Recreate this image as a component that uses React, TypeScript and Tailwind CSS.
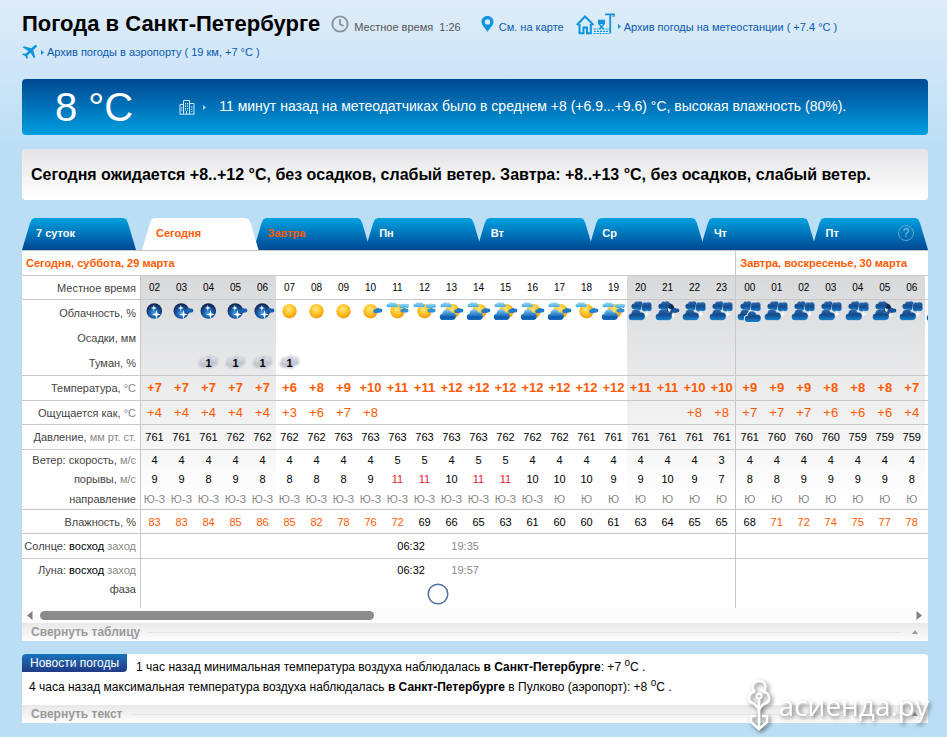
import { useState } from "react";
import type { ReactNode } from "react";
import { clsx } from "clsx";

type Sky =
  | "moon"
  | "moonFew"
  | "sun"
  | "sunFew"
  | "sunHigh"
  | "sunMixed"
  | "dayCloud"
  | "dayCloudHigh"
  | "nightCloud"
  | "nightBroken"
  | "overcast";

type Hour = {
  hour: string;
  sky: Sky;
  fog?: string;
  temp: string;
  feels?: string;
  pressure: number;
  wind: number;
  gust: number;
  dir: string;
  humidity: number;
};

const h = (
  hour: string,
  sky: Sky,
  temp: string,
  feels: string,
  pressure: number,
  wind: number,
  gust: number,
  dir: string,
  humidity: number,
  fog?: string
): Hour => ({ hour, sky, temp, feels, pressure, wind, gust, dir, humidity, fog });

const today: Hour[] = [
  h("02", "moon", "+7", "+4", 761, 4, 9, "Ю-З", 83),
  h("03", "moonFew", "+7", "+4", 761, 4, 9, "Ю-З", 83),
  h("04", "moon", "+7", "+4", 761, 4, 8, "Ю-З", 84, "1"),
  h("05", "moonFew", "+7", "+4", 762, 4, 9, "Ю-З", 85, "1"),
  h("06", "moonFew", "+7", "+4", 762, 4, 8, "Ю-З", 86, "1"),
  h("07", "sun", "+6", "+3", 762, 4, 8, "Ю-З", 85, "1"),
  h("08", "sun", "+8", "+6", 762, 4, 8, "Ю-З", 82),
  h("09", "sun", "+9", "+7", 763, 4, 8, "Ю-З", 78),
  h("10", "sunFew", "+10", "+8", 763, 4, 9, "Ю-З", 76),
  h("11", "sunHigh", "+11", "", 763, 5, 11, "Ю-З", 72),
  h("12", "sunHigh", "+11", "", 763, 5, 11, "Ю-З", 69),
  h("13", "dayCloud", "+12", "", 763, 4, 10, "Ю-З", 66),
  h("14", "dayCloud", "+12", "", 763, 5, 11, "Ю-З", 65),
  h("15", "dayCloud", "+12", "", 762, 5, 11, "Ю-З", 63),
  h("16", "dayCloud", "+12", "", 762, 4, 10, "Ю-З", 61),
  h("17", "dayCloud", "+12", "", 762, 4, 10, "Ю", 60),
  h("18", "sunMixed", "+12", "", 761, 4, 10, "Ю", 60),
  h("19", "dayCloudHigh", "+12", "", 761, 4, 9, "Ю", 61),
  h("20", "nightCloud", "+11", "", 761, 4, 9, "Ю", 63),
  h("21", "nightBroken", "+11", "", 761, 4, 10, "Ю", 64),
  h("22", "nightCloud", "+10", "+8", 761, 4, 9, "Ю", 65),
  h("23", "nightCloud", "+10", "+8", 761, 3, 7, "Ю", 65),
];

const tomorrow: Hour[] = [
  h("00", "overcast", "+9", "+7", 761, 4, 8, "Ю", 68),
  h("01", "nightCloud", "+9", "+7", 760, 4, 8, "Ю", 71),
  h("02", "nightCloud", "+9", "+7", 760, 4, 9, "Ю", 72),
  h("03", "nightCloud", "+8", "+6", 760, 4, 9, "Ю", 74),
  h("04", "nightCloud", "+8", "+6", 759, 4, 9, "Ю", 75),
  h("05", "nightBroken", "+8", "+6", 759, 4, 9, "Ю", 77),
  h("06", "nightCloud", "+7", "+4", 759, 4, 8, "Ю", 78),
];

const hours = [...today, ...tomorrow];

const tabs = ["7 суток", "Сегодня", "Завтра", "Пн", "Вт", "Ср", "Чт", "Пт"];

/* Gradients shared by all the weather icons */
function IconDefs() {
  return (
    <svg width="0" height="0" className="absolute" aria-hidden="true">
      <defs>
        <radialGradient id="sun" cx="45%" cy="35%" r="65%">
          <stop offset="0" stopColor="#ffe680" />
          <stop offset="0.5" stopColor="#ffc72e" />
          <stop offset="1" stopColor="#f59a0c" />
        </radialGradient>
        <radialGradient id="moon" cx="50%" cy="65%" r="60%">
          <stop offset="0" stopColor="#4aa8ea" />
          <stop offset="0.5" stopColor="#1a5ca8" />
          <stop offset="1" stopColor="#0c2450" />
        </radialGradient>
        <linearGradient id="cloud" x1="0" y1="0" x2="0" y2="1">
          <stop offset="0" stopColor="#8ccbf0" />
          <stop offset="0.4" stopColor="#3a93d6" />
          <stop offset="0.75" stopColor="#0f59ab" />
          <stop offset="1" stopColor="#1470c4" />
        </linearGradient>
        <linearGradient id="high" x1="0" y1="0" x2="0" y2="1">
          <stop offset="0" stopColor="#9fdaf6" />
          <stop offset="1" stopColor="#3fa9e2" />
        </linearGradient>
        <linearGradient id="dark" x1="0" y1="0" x2="0" y2="1">
          <stop offset="0" stopColor="#2f6bb0" />
          <stop offset="0.5" stopColor="#124a8c" />
          <stop offset="1" stopColor="#1a80cc" />
        </linearGradient>
      </defs>
    </svg>
  );
}

const puff = (cx: number, cy: number, r: number) =>
  `M${cx - r} ${cy} a${r} ${r} 0 1 1 ${2 * r} 0 a${r} ${r} 0 1 1 ${-2 * r} 0 Z`;

const BIG_CLOUD = [puff(9, 13.8, 4.5), puff(4.9, 16.9, 3.1), puff(14.1, 16.3, 3.7), "M4.900 14 H14 V20 H4.900 Z"].join(" ");
const HIGH_LEFT = [puff(4.4, 5.4, 1.9), puff(7.2, 4.8, 2.5), puff(10.2, 4.8, 2.2), puff(12.2, 5.6, 1.7)].join(" ");
const HIGH_RIGHT = [puff(17, 6, 2), puff(20, 5.8, 2.4), puff(23, 5.8, 2.1)].join(" ");
const HIGH_RIGHT_LOW = [puff(18, 10.8, 1.7), puff(20.6, 10.2, 2.2), puff(22.8, 10.6, 1.8)].join(" ");
const SMALL_RIGHT = [puff(18.2, 11.3, 2), puff(20.8, 10.6, 2.5), puff(23.4, 10.4, 2)].join(" ");
const TOP_LEFT = [puff(7.3, 6.3, 2.9), puff(9.6, 3.8, 2.4), puff(12.8, 4.2, 2.9), puff(11.5, 7.5, 3)].join(" ");
const TOP_RIGHT = [puff(18, 5.4, 3), puff(21.6, 5.2, 2.9), puff(17.7, 8.4, 2.8), puff(21.8, 8.3, 2.8)].join(" ");

const HighLeft = () => <path d={HIGH_LEFT} fill="url(#high)" />;

const HighRight = () => (
  <>
    <path d={HIGH_RIGHT} fill="url(#high)" />
    <path d={HIGH_RIGHT_LOW} fill="#3592d2" />
  </>
);

const SmallRight = ({ fill }: { fill: string }) => <path d={SMALL_RIGHT} fill={fill} />;

const Star = ({ x, y, r }: { x: number; y: number; r: number }) => (
  <path
    transform={`translate(${x} ${y}) scale(${r})`}
    d="M0 -1 L0.220 -0.220 L1 0 L0.220 0.220 L0 1 L-0.220 0.220 L-1 0 L-0.220 -0.220 Z"
    fill="#fff"
  />
);

const Moon = () => (
  <>
    <circle cx="13.3" cy="11" r="7.8" fill="url(#moon)" />
    <Star x={12.8} y={8} r={3} />
    <Star x={15.5} y={14.5} r={4.4} />
  </>
);

const Sun = ({ cx = 13.5 }: { cx?: number }) => <circle cx={cx} cy="11.2" r="7.2" fill="url(#sun)" />;

const NightBase = () => (
  <path d={BIG_CLOUD} fill="url(#dark)" stroke="#8fb9e0" strokeWidth="0.800" paintOrder="stroke" />
);

const NightClouds = () => (
  <>
    <path d={TOP_LEFT} fill="url(#dark)" />
    <path d={TOP_RIGHT} fill="url(#dark)" stroke="#a9cbea" strokeWidth="0.800" paintOrder="stroke" />
    <Star x={19.500} y={14} r={3.6} />
    <NightBase />
  </>
);

const skyArt: Record<Sky, ReactNode> = {
  moon: <Moon />,
  moonFew: (
    <>
      <Moon />
      <SmallRight fill="#1660ad" />
    </>
  ),
  sun: <Sun />,
  sunFew: (
    <>
      <Sun />
      <SmallRight fill="#1f83cf" />
    </>
  ),
  sunHigh: (
    <>
      <Sun />
      <HighLeft />
      <HighRight />
    </>
  ),
  sunMixed: (
    <>
      <Sun />
      <HighLeft />
      <SmallRight fill="#1f83cf" />
    </>
  ),
  dayCloud: (
    <>
      <Sun cx={14.5} />
      <HighLeft />
      <SmallRight fill="#1f7bc8" />
      <path d={BIG_CLOUD} fill="url(#cloud)" />
    </>
  ),
  dayCloudHigh: (
    <>
      <Sun cx={14.5} />
      <HighLeft />
      <HighRight />
      <path d={BIG_CLOUD} fill="url(#cloud)" />
    </>
  ),
  nightCloud: <NightClouds />,
  nightBroken: (
    <>
      <circle cx="14.5" cy="9" r="6" fill="#0f2c58" />
      <path d={TOP_LEFT} fill="url(#dark)" />
      <path d="M14 8 L17.500 9.500 L16.500 12.500 L14 11 Z" fill="#dfe6ef" />
      <SmallRight fill="#15549c" />
      <Star x={19} y={15} r={3.2} />
      <NightBase />
    </>
  ),
  overcast: (
    <>
      <NightClouds />
      <path
        transform="translate(7 2)"
        d={BIG_CLOUD}
        fill="url(#dark)"
        stroke="#e4eefa"
        strokeWidth="2"
        paintOrder="stroke"
      />
    </>
  ),
};

function SkyIcon({ sky }: { sky: Sky }) {
  return (
    <svg width="27" height="24" viewBox="0 0 27 24" className="block max-w-none" role="img" aria-label={sky}>
      {skyArt[sky]}
    </svg>
  );
}

function Fog({ value }: { value: string }) {
  return (
    <span className="relative flex h-6 w-full items-center justify-center font-bold">
      <svg width="27" height="24" viewBox="0 0 27 24" className="absolute inset-0 blur-[1px]" aria-hidden="true">
        <path
          d="M5 15 C2.500 14.500 3 11 5 10.800 C4.500 7.500 8 5.500 10.500 7 C12 4.500 16 4 18 6 C21 5 23.500 7 22.500 9.500 C24 12 22 15 19.500 14.500 C18 18 13.500 18.300 12 16.500 C9.500 17.500 6 17.500 5 15 Z"
          fill="#c0c5d0"
        />
        <path d="M7 11 C9 8 13 8 14 10 M16 8 C18 7 20 8 20 10" stroke="#e4e7ee" strokeWidth="2" fill="none" />
      </svg>
      <span className="relative">{value}</span>
    </span>
  );
}

const Arrow = ({ className }: { className?: string }) => (
  <svg width="3" height="5" viewBox="0 0 3 5" className={clsx("shrink-0", className)} aria-hidden="true">
    <path d="M0 0 L3 2.500 L0 5 Z" fill="currentColor" />
  </svg>
);

function Header() {
  return (
    <header className="pt-[10px]">
      <div className="flex items-center whitespace-nowrap">
        <h1 className="text-[22px] leading-7 font-bold text-black">Погода в Санкт-Петербурге</h1>
        <svg width="18" height="18" viewBox="0 0 18 18" fill="none" className="ml-[11px]" aria-hidden="true">
          <circle cx="9" cy="9" r="7.700" stroke="#8a9098" strokeWidth="1.800" />
          <path d="M9 4 V9.300 L12.500 11" stroke="#8a9098" strokeWidth="1.800" />
        </svg>
        <span className="ml-[5px] pt-[6px] text-[11px] leading-4 text-[#555]">Местное время&nbsp; 1:26</span>
        <a href="#map" className="ml-[20px] flex items-center text-[11px] leading-4 text-[#0a5aaf]">
          <svg width="13" height="16" viewBox="0 0 13 16" aria-hidden="true">
            <path
              fillRule="evenodd"
              d="M6.500 0 C10 0 12.500 2.500 12.500 5.800 C12.500 9.200 8.800 12 6.500 16 C4.200 12 0.500 9.200 0.500 5.800 C0.500 2.500 3 0 6.500 0 Z M6.500 3.200 A2.700 2.700 0 1 0 6.500 8.600 A2.700 2.700 0 1 0 6.500 3.200 Z"
              fill="#0e93dc"
            />
          </svg>
          <span className="ml-[5px] pt-[6px]">См. на карте</span>
        </a>
        <a href="#station" className="ml-[12px] flex items-center text-[11px] leading-4 text-[#0a5aaf]">
          <svg width="40" height="22" viewBox="0 0 40 22" fill="none" stroke="#0e93dc" aria-hidden="true">
            <path d="M0.800 12 L9 3.500 L17.500 12" strokeWidth="2" />
            <path d="M3.500 11 V20.200 H7.500 V14.500 H11 V20.200 H14.800 V11" strokeWidth="2" />
            <path d="M22 6.700 H29 V11 H22 Z" fill="#0e93dc" stroke="none" />
            <path d="M23 11 L27.500 16 M28 11 L23.500 16" strokeWidth="1.500" />
            <path d="M17.500 16 H33 M18 18.300 H33 M17.500 20.500 H33" strokeWidth="1.200" strokeDasharray="2 1" />
            <path d="M34.200 20.500 V1.500 M29 1.300 H39" strokeWidth="1.800" />
            <path d="M36 3 H39" strokeWidth="1" />
          </svg>
          <Arrow className="mt-[5px] ml-[2px] text-[#0e93dc]" />
          <span className="ml-[3px] pt-[6px]">Архив погоды на метеостанции ( +7.4 °C )</span>
        </a>
      </div>
      <a href="#airport" className="mt-[5px] flex w-fit items-center text-[11px] leading-[18px] text-[#0a5aaf]">
        <svg width="15" height="14" viewBox="0 0 15 14" fill="#0e93dc" aria-hidden="true">
          <path d="M14.800 0.200 C13.500 -0.200 12.200 0.600 11 1.700 L9.300 3.300 L1.800 1.200 L0.600 2.300 L6.500 5.900 L3.700 8.800 L1.200 8.400 L0 9.500 L3.300 11 L4.700 14 L5.900 12.900 L5.500 10.500 L8.500 7.800 L12 13.300 L13.200 12.200 L11.200 5.100 L12.900 3.500 C14.200 2.300 15.100 1.300 14.800 0.200 Z" />
        </svg>
        <Arrow className="ml-[4px] text-[#0e93dc]" />
        <span className="ml-[3px]">Архив погоды в аэропорту ( 19 км, +7 °C )</span>
      </a>
    </header>
  );
}

function CurrentBanner() {
  return (
    <section className="mt-[18px] flex h-14 items-center rounded-[4px] bg-linear-to-b from-[#004892] to-[#00a0e0] pl-[33px] text-white">
      <p className="text-[40px] leading-none whitespace-nowrap">8 °C</p>
      <svg width="16" height="16" viewBox="0 0 16 16" fill="none" stroke="#cfe8f8" className="ml-[46px] shrink-0" aria-hidden="true">
        <path d="M4.500 15 V1.500 H10.500 V15 M1 15 V5.500 H4.500 M10.500 4.500 H15 V15 M0.500 15.200 H15.500" />
        <path d="M6.500 4 V12 M8.500 4 V12 M2.800 8 V13 M12.800 7 V13" strokeDasharray="1.500 1" />
        <path d="M7.500 12 V15" />
      </svg>
      <Arrow className="ml-[8px] text-[#9fd6f2]" />
      <p className="ml-[13px] pb-[2px] text-[14px] leading-5">
        11 минут назад на метеодатчиках было в среднем +8 (+6.9...+9.6) °C, высокая влажность (80%).
      </p>
    </section>
  );
}

function Tabs({ active, onSelect }: { active: string; onSelect: (tab: string) => void }) {
  return (
    <nav className="mt-[18px] flex h-8">
      {tabs.map((tab, i) => (
        <button
          key={tab}
          onClick={() => onSelect(tab)}
          className={clsx(
            "flex items-center pb-[2px] pl-[14px] text-left text-[11px] font-bold",
            "[clip-path:polygon(0_100%,8px_5px,10px_1px,13px_0,calc(100%_-_13px)_0,calc(100%_-_10px)_1px,calc(100%_-_8px)_5px,100%_100%)]",
            i === 0 ? "mr-[6px] w-[114px] shrink-0" : "flex-1",
            i > 1 && "-ml-[5px]",
            tab === active ? "relative z-10 bg-white" : "bg-linear-to-b from-[#00a2e0] to-[#004892]",
            i === 1 || i === 2 ? "text-[#ff5a00]" : "text-white"
          )}
        >
          {tab}
          {i === tabs.length - 1 && (
            <span className="mr-[14px] ml-auto flex size-4 items-center justify-center rounded-full border border-[#5fa3d3] text-[12px] leading-none font-normal text-[#8fc0e2]">
              ?
            </span>
          )}
        </button>
      ))}
    </nav>
  );
}

type RowProps = {
  label: ReactNode;
  height: string;
  line?: boolean;
  className?: string;
  render: (hour: Hour) => ReactNode;
  extra?: ReactNode;
};

const LINE = "border-b border-[#c8c8c8]";

function RowLabel({ children, line = true }: { children: ReactNode; line?: boolean }) {
  return (
    <th
      scope="row"
      className={clsx("border-r border-r-[#c8c8c8] pr-[4px] text-right font-normal whitespace-nowrap text-[#444]", line && LINE)}
    >
      {children}
    </th>
  );
}

function Row({ label, height, line = true, className, render, extra }: RowProps) {
  return (
    <tr className={height}>
      <RowLabel line={line}>{label}</RowLabel>
      {hours.map((hour, i) => (
        <td
          key={i}
          className={clsx("text-center whitespace-nowrap", className, line && LINE, i === today.length && "border-l border-l-[#c8c8c8]")}
        >
          {render(hour)}
        </td>
      ))}
      <td className={clsx("overflow-hidden", line && LINE)}>{extra}</td>
    </tr>
  );
}

const Unit = ({ children }: { children: ReactNode }) => <span className="text-[#888]">{children}</span>;

function RiseSet({ rise, set }: { rise: string; set: string }) {
  return (
    <div className="flex justify-center">
      <span className="w-[54px] text-center text-black">{rise}</span>
      <span className="w-[54px] text-center text-[#888]">{set}</span>
    </div>
  );
}

const NIGHT = "bg-[linear-gradient(#fff_25px,#d8d9db_25px,#fff_250px)]";

function ForecastTable() {
  return (
    <div className="overflow-hidden border-t border-[#c8c8c8] bg-white">
      <table className="w-full table-fixed border-separate border-spacing-0 text-[11px] leading-4 text-black">
        <colgroup>
          <col className="w-[119px]" />
        </colgroup>
        <colgroup className={NIGHT}>
          <col span={5} className="w-[27px]" />
        </colgroup>
        <colgroup>
          <col span={13} className="w-[27px]" />
        </colgroup>
        <colgroup className={NIGHT}>
          <col span={4} className="w-[27px]" />
          <col className="w-[28px]" />
          <col span={6} className="w-[27px]" />
        </colgroup>
        <colgroup>
          <col />
        </colgroup>
        <tbody>
          <tr className="h-[25px] text-left text-[#ff5a00]">
            <th colSpan={23} className={clsx("bg-white pl-[4px]", LINE)}>
              Сегодня, суббота, 29 марта
            </th>
            <th colSpan={8} className={clsx("border-l border-l-[#c8c8c8] bg-white pl-[4px]", LINE)}>
              Завтра, воскресенье, 30 марта
            </th>
          </tr>
          <Row label="Местное время" height="h-[24px]" className="text-[10px]" render={(x) => x.hour} />
          <Row
            label="Облачность, %"
            height="h-[25px]"
            line={false}
            className="align-top"
            render={(x) => <SkyIcon sky={x.sky} />}
            extra={<SkyIcon sky="nightCloud" />}
          />
          <Row label="Осадки, мм" height="h-[25px]" line={false} render={() => null} />
          <Row label="Туман, %" height="h-[26px]" render={(x) => x.fog && <Fog value={x.fog} />} />
          <Row
            label={<>Температура, <Unit>°C</Unit></>}
            height="h-[25px]"
            className="text-[13px] font-bold text-[#ff5a00]"
            render={(x) => x.temp}
          />
          <Row
            label={<>Ощущается как, <Unit>°C</Unit></>}
            height="h-[24px]"
            className="text-[13px] text-[#ff5a00]"
            render={(x) => x.feels}
          />
          <Row label={<>Давление, <Unit>мм рт. ст.</Unit></>} height="h-[25px]" render={(x) => x.pressure} />
          <Row label={<>Ветер: скорость, <Unit>м/с</Unit></>} height="h-[19px]" line={false} render={(x) => x.wind} />
          <Row
            label={<>порывы, <Unit>м/с</Unit></>}
            height="h-[19px]"
            line={false}
            render={(x) => <span className={clsx(x.gust > 10 && "text-[#e8202a]")}>{x.gust}</span>}
          />
          <Row label="направление" height="h-[22px]" className="text-[#888]" render={(x) => x.dir} />
          <Row
            label="Влажность, %"
            height="h-[24px]"
            render={(x) => <span className={clsx(x.humidity > 70 && "text-[#ff5a00]")}>{x.humidity}</span>}
          />
          <tr className="h-[25px]">
            <RowLabel>
              Солнце: <span className="text-black">восход</span> <Unit>заход</Unit>
            </RowLabel>
            <td colSpan={22} className={LINE}>
              <RiseSet rise="06:32" set="19:35" />
            </td>
            <td colSpan={8} className={clsx("border-l border-l-[#c8c8c8]", LINE)} />
          </tr>
          <tr className="h-[22px]">
            <RowLabel line={false}>
              Луна: <span className="text-black">восход</span> <Unit>заход</Unit>
            </RowLabel>
            <td colSpan={22}>
              <RiseSet rise="06:32" set="19:57" />
            </td>
            <td colSpan={8} className="border-l border-l-[#c8c8c8]" />
          </tr>
          <tr className="h-[27px] align-top">
            <RowLabel line={false}>фаза</RowLabel>
            <td colSpan={22}>
              <svg width="22" height="22" viewBox="0 0 22 22" className="mx-auto mt-[2px] block" aria-hidden="true">
                <circle cx="11" cy="11" r="9.800" fill="#fff" stroke="#4d74a8" strokeWidth="1.500" />
              </svg>
            </td>
            <td colSpan={8} className="border-l border-l-[#c8c8c8]" />
          </tr>
        </tbody>
      </table>
      <div className="flex h-[15px] items-center bg-[#fcfcfc] pr-[6px] pl-[5px]">
        <button aria-label="Назад" className="text-[#808080]">
          <svg width="6" height="9" viewBox="0 0 6 9" className="block" aria-hidden="true">
            <path d="M5.500 0 V9 L0 4.500 Z" fill="currentColor" />
          </svg>
        </button>
        <div className="mx-[7px] flex-1">
          <div className="h-[9px] w-5/13 rounded-full bg-[#8b8b8b]" />
        </div>
        <button aria-label="Вперёд" className="text-[#808080]">
          <svg width="6" height="9" viewBox="0 0 6 9" className="block" aria-hidden="true">
            <path d="M0.500 0 V9 L6 4.500 Z" fill="currentColor" />
          </svg>
        </button>
      </div>
    </div>
  );
}

function CollapseBar({ children }: { children: ReactNode }) {
  return (
    <button className="flex h-[18px] w-full items-center bg-linear-to-b from-[#e8e8e8] to-[#fdfdfd] pr-[10px] pl-[9px] text-[12px] leading-4 font-bold text-[#999]">
      {children}
      <span className="mr-[11px] ml-[8px] h-px flex-1 bg-[#e4e4e4]" />
      <svg width="6" height="4" viewBox="0 0 6 4" aria-hidden="true">
        <path d="M0 4 L3 0 L6 4 Z" fill="#999" />
      </svg>
    </button>
  );
}

function News() {
  return (
    <section className="mt-[13px] rounded-t-[4px] bg-white text-[12px] text-black">
      <div className="h-[51px]">
        <div className="flex items-start">
          <h2 className="h-[18px] rounded-tl-[4px] rounded-br-[4px] bg-linear-to-b from-[#1373ba] to-[#203a86] px-[8px] leading-[18px] text-white">
            Новости погоды
          </h2>
          <p className="ml-[9px] pt-[3px] leading-5">
            1 час назад минимальная температура воздуха наблюдалась <b>в Санкт-Петербурге</b>: +7{" "}
            <sup className="text-[10px]">o</sup>C .
          </p>
        </div>
        <p className="pl-[7px] leading-5">
          4 часа назад максимальная температура воздуха наблюдалась <b>в Санкт-Петербурге</b> в Пулково
          (аэропорт): +8 <sup className="text-[10px]">o</sup>C .
        </p>
      </div>
      <CollapseBar>Свернуть текст</CollapseBar>
    </section>
  );
}

function Watermark() {
  return (
    <div className="pointer-events-none absolute right-[18px] bottom-[6px] flex items-center gap-[8px] text-white drop-shadow-[2px_2px_2px_rgba(0,0,0,0.55)]">
      <svg width="24" height="52" viewBox="0 0 24 52" fill="none" stroke="currentColor" strokeWidth="2.500" aria-hidden="true">
        <path d="M8 13 C3 8 6 2 12 2 C18 2 21 8 16 13" />
        <path d="M8 13 C1 13 0 22 5 24 C8 25 10 27 12 31 C14 27 16 25 19 24 C24 22 23 13 16 13" />
        <circle cx="12" cy="17" r="2.500" strokeWidth="2" />
        <path d="M12 19 V48" />
        <path d="M9 37 H4 V43 L12 50 L20 43 V37 H15" />
      </svg>
      <span className="font-['Open_Sans','Noto_Sans',sans-serif] text-[28px] leading-10">асиенда.ру</span>
    </div>
  );
}

export default function App() {
  const [active, setActive] = useState("Сегодня");

  return (
    <div className="relative min-h-screen bg-[#bbdef5] bg-[linear-gradient(#dfecf8,#bbdef5_150px)] pr-[19px] pb-[14px] pl-[22px] font-['Liberation_Sans',Arial,sans-serif]">
      <IconDefs />
      <Header />
      <CurrentBanner />
      <p className="mt-[14px] rounded-[4px] bg-linear-to-b from-[#e5e5e7] to-white px-[9px] py-[13px] text-[16px] leading-[25px] font-bold text-black">
        Сегодня ожидается +8..+12 °C, без осадков, слабый ветер. Завтра: +8..+13 °C, без осадков, слабый ветер.
      </p>
      <Tabs active={active} onSelect={setActive} />
      <ForecastTable />
      <CollapseBar>Свернуть таблицу</CollapseBar>
      <News />
      <Watermark />
    </div>
  );
}
